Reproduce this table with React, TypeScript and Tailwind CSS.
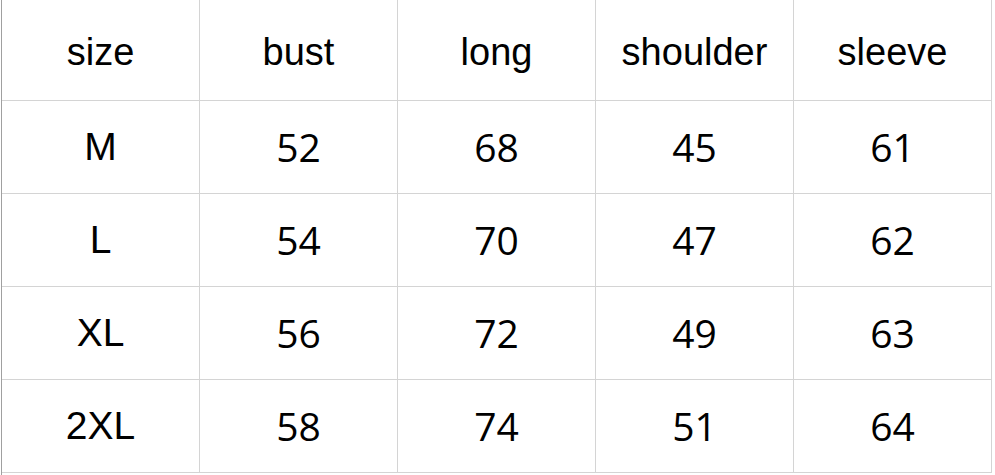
import React from "react";

const header = ["size", "bust", "long", "shoulder", "sleeve"];
const rows = [
  ["M", "52", "68", "45", "61"],
  ["L", "54", "70", "47", "62"],
  ["XL", "56", "72", "49", "63"],
  ["2XL", "58", "74", "51", "64"],
];

export default function App() {
  return (
    <div className="w-[995px] h-[475px] bg-white overflow-hidden">
      <div className="ml-[1px] border-l border-[#a0a0a0] w-[991px] h-[475px]">
        <div className="grid grid-cols-[repeat(5,198px)]">
          {header.map((h, i) => (
            <div
              key={i}
              className="h-[101px] border-r border-b border-[#d4d4d4] flex items-center justify-center pt-[4px] text-[38px] text-black"
              style={{ fontFamily: '"Liberation Sans", Arial, sans-serif' }}
            >
              {h}
            </div>
          ))}
          {rows.map((r, ri) =>
            r.map((c, ci) => (
              <div
                key={`${ri}-${ci}`}
                className="h-[93px] border-r border-b border-[#d4d4d4] flex items-center justify-center text-black"
                style={{
                  fontFamily:
                    ci === 0
                      ? '"Liberation Sans", Arial, sans-serif'
                      : '"Open Sans", "Noto Sans", sans-serif',
                  fontSize: ci === 0 ? "39px" : "39px",
                }}
              >
                {c}
              </div>
            ))
          )}
        </div>
      </div>
    </div>
  );
}
